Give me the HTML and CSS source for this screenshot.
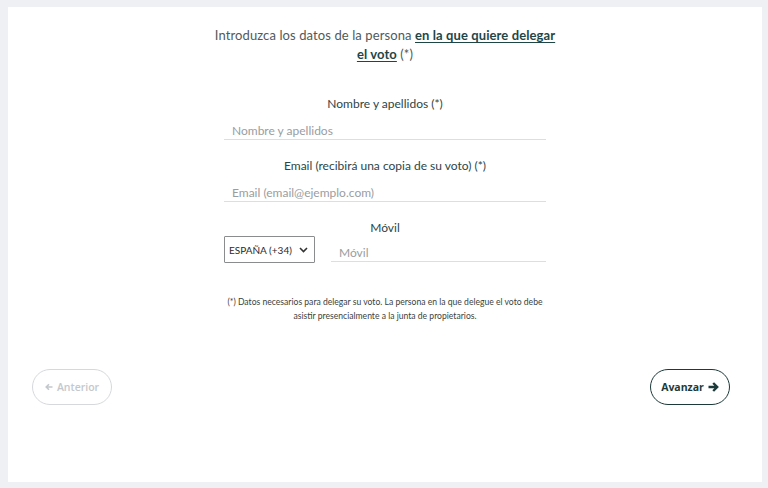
FILE: index.html
```html
<!DOCTYPE html>
<html lang="es">
<head>
<meta charset="utf-8">
<title>Delegar voto</title>
<link rel="stylesheet" href="styles.css">
</head>
<body>
<div class="card">
  <div class="form">
    <p class="title">Introduzca los datos de la persona <a href="#" class="title-link">en la que quiere delegar el voto</a> (*)</p>

    <div class="field">
      <label class="label">Nombre y apellidos (*)</label>
      <input class="input" type="text" placeholder="Nombre y apellidos">
    </div>

    <div class="field">
      <label class="label">Email (recibirá una copia de su voto) (*)</label>
      <input class="input" type="text" placeholder="Email (email@ejemplo.com)">
    </div>

    <div class="field">
      <label class="label">Móvil</label>
      <div class="phone-row">
        <div class="select">
          <span>ESPAÑA (+34)</span>
          <svg class="chev" width="9" height="6" viewBox="0 0 9 6"><path d="M1 1l3.5 3.5L8 1" fill="none" stroke="#333" stroke-width="1.6"/></svg>
        </div>
        <input class="input phone" type="text" placeholder="Móvil">
      </div>
    </div>

    <p class="note">(*) Datos necesarios para delegar su voto. La persona en la que delegue el voto debe asistir presencialmente a la junta de propietarios.</p>
  </div>

  <div class="nav">
    <button class="btn btn-prev"><svg width="8" height="8" viewBox="0 0 8 8"><path d="M7.5 4H1.5M4 1.2L1.2 4 4 6.8" fill="none" stroke="#c4c8cc" stroke-width="1.6"/></svg>Anterior</button>
    <button class="btn btn-next">Avanzar<svg width="11" height="10" viewBox="0 0 11 10"><path d="M0.5 5H9M5.2 1L9.2 5 5.2 9" fill="none" stroke="#1d3a3a" stroke-width="2.4"/></svg></button>
  </div>
</div>
</body>
</html>
```

FILE: styles.css
```css
html, body {
  margin: 0;
  padding: 0;
}
body {
  background: #eef0f3;
  padding: 7px 6px 6px 8px;
  font-family: Lato, "Noto Sans", sans-serif;
}
.card {
  background: #fff;
  height: 475px;
  box-sizing: border-box;
  display: flex;
  flex-direction: column;
  align-items: center;
  padding-top: 19px;
  position: relative;
}
.form {
  width: 322px;
  display: flex;
  flex-direction: column;
  align-items: stretch;
}
.title {
  margin: 0 -12px 0;
  text-align: center;
  font-size: 13px;
  line-height: 19px;
  color: #505a5a;
  letter-spacing: 0.1px;
}
.title-link {
  color: #1e4646;
  font-weight: 700;
  text-decoration: underline;
  text-underline-offset: 2px;
}
.field {
  display: flex;
  flex-direction: column;
  align-items: stretch;
}
.label {
  text-align: center;
  font-size: 12px;
  color: #2c4646;
  line-height: 16px;
  margin-top: 32px;
  margin-bottom: 6px;
}
.field + .field .label {
  margin-top: 18px;
}
.input {
  border: none;
  border-bottom: 1px solid #dcdedf;
  outline: none;
  font-family: inherit;
  font-size: 12px;
  color: #333;
  padding: 4px 8px 0;
  height: 22px;
  line-height: 16px;
  box-sizing: border-box;
  background: transparent;
}
.input::placeholder {
  color: #9a9d9f;
}
.phone-row {
  display: flex;
  align-items: flex-end;
  gap: 16px;
  margin-top: -6px;
}
.select {
  width: 91px;
  height: 27px;
  box-sizing: border-box;
  border: 1px solid #8a8c8e;
  border-radius: 1px;
  display: flex;
  align-items: center;
  justify-content: space-between;
  padding: 0 6px 0 4px;
  font-size: 10px;
  color: #2a2a2a;
}
.chev {
  display: block;
}
.phone {
  flex: 1;
  height: 25px;
  padding-top: 7px;
  margin-bottom: 1px;
}
.note {
  margin: 32px 0 0;
  text-align: center;
  font-size: 8.6px;
  line-height: 14px;
  color: #3a3f40;
}
.nav {
  position: absolute;
  left: 24px;
  right: 32px;
  top: 362px;
  display: flex;
  justify-content: space-between;
}
.btn {
  width: 80px;
  height: 36px;
  border-radius: 18px;
  background: #fff;
  font-family: "Open Sans", Lato, sans-serif;
  font-size: 10.5px;
  font-weight: 600;
  display: flex;
  align-items: center;
  justify-content: center;
  gap: 4px;
  padding: 0;
  cursor: pointer;
}
.btn-prev {
  border: 1px solid #d6d9dc;
  color: #c4c8cc;
}
.btn-next {
  border: 1.5px solid #1d3a3a;
  color: #1d3a3a;
  font-weight: 700;
}
```
